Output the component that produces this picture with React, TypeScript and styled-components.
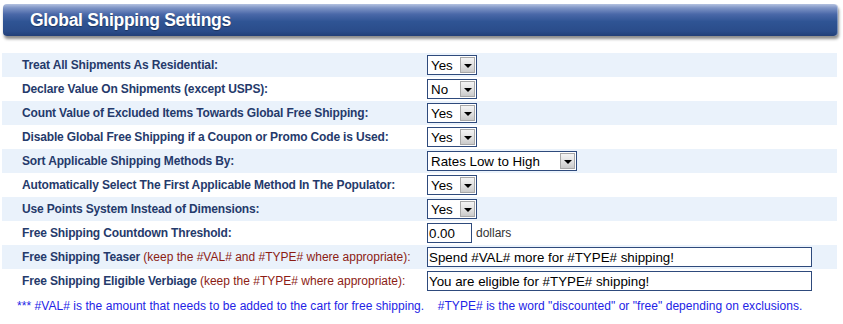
import React from 'react';
import styled, { createGlobalStyle } from 'styled-components';

const GlobalStyle = createGlobalStyle`
  html, body {
    margin: 0;
    padding: 0;
    background: #ffffff;
  }
  body {
    font-family: "Liberation Sans", Arial, sans-serif;
  }
`;

const Page = styled.div`
  width: 843px;
  height: 324px;
  overflow: hidden;
  padding-top: 4px;
  box-sizing: border-box;
`;

const HeaderBar = styled.div`
  margin: 0 5px 0 3px;
  height: 32px;
  border-radius: 4px;
  background: linear-gradient(
    to bottom,
    #b4c2e0 0%,
    #7f95c6 12%,
    #4a68a8 32%,
    #2f5494 55%,
    #2a4c8a 85%,
    #223f77 100%
  );
  box-shadow: 1px 3px 3px rgba(0, 0, 0, 0.45), inset -1px 0 0 rgba(255, 255, 255, 0.35);
  display: flex;
  align-items: center;
  padding-left: 27px;
`;

const HeaderTitle = styled.h1`
  margin: 0;
  font-family: "Liberation Sans", Arial, sans-serif;
  font-size: 17.5px;
  font-weight: bold;
  color: #ffffff;
  letter-spacing: -0.3px;
  text-shadow: 0 1px 1px rgba(0, 0, 0, 0.35);
`;

const Table = styled.div`
  margin: 17px 6px 0 2px;
  display: flex;
  flex-direction: column;
`;

const Row = styled.div<{ $shaded: boolean }>`
  display: grid;
  grid-template-columns: 425px 1fr;
  align-items: center;
  height: 24px;
  background-color: ${(props: { $shaded: boolean }) => (props.$shaded ? '#eaf2fb' : '#ffffff')};
`;

const Label = styled.div`
  padding-left: 20px;
  font-size: 12px;
  font-weight: bold;
  letter-spacing: -0.15px;
  color: #253a6b;
  white-space: nowrap;
`;

const Hint = styled.span`
  font-weight: normal;
  letter-spacing: 0;
  color: #8c1c14;
`;

const Control = styled.div`
  display: flex;
  align-items: center;
  gap: 4px;
`;

const SelectBox = styled.div<{ $width: number }>`
  box-sizing: border-box;
  width: ${(props: { $width: number }) => props.$width}px;
  height: 20px;
  border: 1px solid #2e4a7c;
  background: #ffffff;
  display: flex;
  align-items: center;
  justify-content: space-between;
  padding: 0 1px 0 3px;
`;

const SelectValue = styled.span`
  font-size: 13.33px;
  color: #000000;
  white-space: nowrap;
`;

const ArrowButton = styled.span`
  box-sizing: border-box;
  width: 15px;
  height: 16px;
  border: 1px solid #a8a8a8;
  background: linear-gradient(to bottom, #f4f4f4 0%, #dedede 60%, #cacaca 100%);
  display: flex;
  align-items: center;
  justify-content: center;

  &::after {
    content: '';
    width: 0;
    height: 0;
    border-left: 4px solid transparent;
    border-right: 4px solid transparent;
    border-top: 4px solid #000000;
    margin-top: 1px;
  }
`;

const TextField = styled.input<{ $width: number }>`
  box-sizing: border-box;
  width: ${(props: { $width: number }) => props.$width}px;
  height: 20px;
  border: 1px solid #2e4a7c;
  padding: 0 1px;
  font-family: "Liberation Sans", Arial, sans-serif;
  font-size: 13.33px;
  color: #000000;
  background: #ffffff;
  outline: none;
`;

const Unit = styled.span`
  font-size: 12px;
  color: #333333;
`;

const Note = styled.p`
  margin: 6px 0 0 17px;
  font-size: 12px;
  letter-spacing: 0.05px;
  color: #2323e6;
  white-space: pre;
`;

interface SelectProps {
  value: string;
  width?: number;
}

const FakeSelect: React.FC<SelectProps> = ({ value, width = 50 }: SelectProps) => (
  <SelectBox $width={width}>
    <SelectValue>{value}</SelectValue>
    <ArrowButton />
  </SelectBox>
);

const rows: { label: React.ReactNode; control: React.ReactNode }[] = [
  { label: 'Treat All Shipments As Residential:', control: <FakeSelect value="Yes" /> },
  { label: 'Declare Value On Shipments (except USPS):', control: <FakeSelect value="No" /> },
  { label: 'Count Value of Excluded Items Towards Global Free Shipping:', control: <FakeSelect value="Yes" /> },
  { label: 'Disable Global Free Shipping if a Coupon or Promo Code is Used:', control: <FakeSelect value="Yes" /> },
  { label: 'Sort Applicable Shipping Methods By:', control: <FakeSelect value="Rates Low to High" width={150} /> },
  { label: 'Automatically Select The First Applicable Method In The Populator:', control: <FakeSelect value="Yes" /> },
  { label: 'Use Points System Instead of Dimensions:', control: <FakeSelect value="Yes" /> },
  {
    label: 'Free Shipping Countdown Threshold:',
    control: (
      <>
        <TextField $width={45} value="0.00" readOnly />
        <Unit>dollars</Unit>
      </>
    ),
  },
  {
    label: (
      <>
        Free Shipping Teaser <Hint>(keep the #VAL# and #TYPE# where appropriate):</Hint>
      </>
    ),
    control: <TextField $width={385} value="Spend #VAL# more for #TYPE# shipping!" readOnly />,
  },
  {
    label: (
      <>
        Free Shipping Eligible Verbiage <Hint>(keep the #TYPE# where appropriate):</Hint>
      </>
    ),
    control: <TextField $width={385} value="You are eligible for #TYPE# shipping!" readOnly />,
  },
];

const App: React.FC = () => (
  <>
    <GlobalStyle />
    <Page>
      <HeaderBar>
        <HeaderTitle>Global Shipping Settings</HeaderTitle>
      </HeaderBar>
      <Table>
        {rows.map((row, i) => (
          <Row key={i} $shaded={i % 2 === 0}>
            <Label>{row.label}</Label>
            <Control>{row.control}</Control>
          </Row>
        ))}
      </Table>
      <Note>
        {'*** #VAL# is the amount that needs to be added to the cart for free shipping.    #TYPE# is the word "discounted" or "free" depending on exclusions.'}
      </Note>
    </Page>
  </>
);

export default App;
